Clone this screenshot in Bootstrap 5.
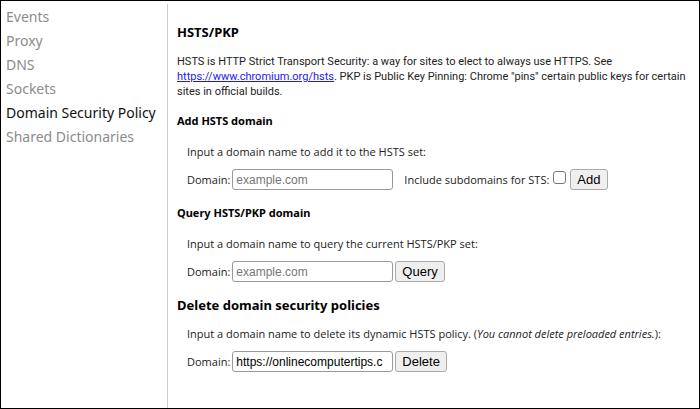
<!DOCTYPE html>
<html lang="en">
<head>
<meta charset="utf-8">
<meta name="viewport" content="width=device-width, initial-scale=1">
<title>Domain Security Policy</title>
<link href="https://cdn.jsdelivr.net/npm/bootstrap@5.3.0/dist/css/bootstrap.min.css" rel="stylesheet">
<style>
body { font-family: "Open Sans", "Noto Sans", sans-serif; font-size: 11px; line-height: 15px; color: #222; background: #fff; }
.frame { border: 1px solid #000; padding-top: 3px; }
.side { width: 167px; border-right: 1px solid #ccc; padding: 1px 0 0 5px; }
.side .nav-link { color: #8c8c8c; font-family: "Noto Sans", sans-serif; font-size: 14px; line-height: 24px; padding: 0; white-space: nowrap; }
.side .nav-link.active { color: #111; }
.policy { padding: 20px 4px 16px 9px; }
.policy h2, .policy h3 { color: #000; font-family: "Noto Sans", sans-serif; font-weight: 700; margin: 0; line-height: 16px; }
.policy h2 { font-size: 13px; }
.policy h3 { font-size: 11px; }
.policy a { color: #1a1aee; }
.intro { margin: 14px 0; font-family: Roboto, sans-serif; }
.block { padding: 15px 0 15px 10px; }
h2 + .block { padding-top: 13px; }
.block p { margin: 0 0 9px; line-height: 16px; }
.line { gap: 2px; line-height: 21px; }
.line .form-control { width: 161px; height: 21px; min-height: 0; padding: 0 3px; border: 1px solid #999; border-radius: 3px; font: 12px/19px "Liberation Sans", Arial, sans-serif; color: #000; }
.line .form-control::placeholder { color: #777; }
.line .btn { height: 21px; padding: 0 6px; border: 1px solid #aaa; border-radius: 3px; background: #efefef; color: #000; font: 13px/19px "Liberation Sans", Arial, sans-serif; }
.line .form-check-input { width: 13px; height: 13px; margin: 0 2px 4px 2px; border: 1px solid #767676; border-radius: 3px; }
.sub { margin-left: 9px; }
</style>
<script defer src="https://cdn.jsdelivr.net/npm/bootstrap@5.3.0/dist/js/bootstrap.bundle.min.js"></script>
</head>
<body>
<div class="frame d-flex min-vh-100">
  <nav class="side nav flex-column flex-nowrap flex-shrink-0">
    <a class="nav-link" href="#events">Events</a>
    <a class="nav-link" href="#proxy">Proxy</a>
    <a class="nav-link" href="#dns">DNS</a>
    <a class="nav-link" href="#sockets">Sockets</a>
    <a class="nav-link active" aria-current="page" href="#hsts">Domain Security Policy</a>
    <a class="nav-link" href="#dictionaries">Shared Dictionaries</a>
  </nav>
  <main class="policy flex-grow-1">
    <h2>HSTS/PKP</h2>
    <p class="intro">HSTS is HTTP Strict Transport Security: a way for sites to elect to always use HTTPS. See <br><a href="https://www.chromium.org/hsts">https://www.chromium.org/hsts</a>. PKP is Public Key Pinning: Chrome "pins" certain public keys for certain <br>sites in official builds.</p>

    <h3>Add HSTS domain</h3>
    <form class="block">
      <p>Input a domain name to add it to the HSTS set:</p>
      <div class="line d-flex align-items-center">
        <label for="add-domain">Domain:</label>
        <input class="form-control" id="add-domain" type="text" placeholder="example.com">
        <label class="sub" for="add-sub">Include subdomains for STS:</label>
        <input class="form-check-input" id="add-sub" type="checkbox">
        <button class="btn" type="button">Add</button>
      </div>
    </form>

    <h3>Query HSTS/PKP domain</h3>
    <form class="block">
      <p>Input a domain name to query the current HSTS/PKP set:</p>
      <div class="line d-flex align-items-center">
        <label for="query-domain">Domain:</label>
        <input class="form-control" id="query-domain" type="text" placeholder="example.com">
        <button class="btn" type="button">Query</button>
      </div>
    </form>

    <h2>Delete domain security policies</h2>
    <form class="block">
      <p>Input a domain name to delete its dynamic HSTS policy. (<i>You cannot delete preloaded entries.</i>):</p>
      <div class="line d-flex align-items-center">
        <label for="delete-domain">Domain:</label>
        <input class="form-control" id="delete-domain" type="text" value="https://onlinecomputertips.c">
        <button class="btn" type="button">Delete</button>
      </div>
    </form>
  </main>
</div>
</body>
</html>
